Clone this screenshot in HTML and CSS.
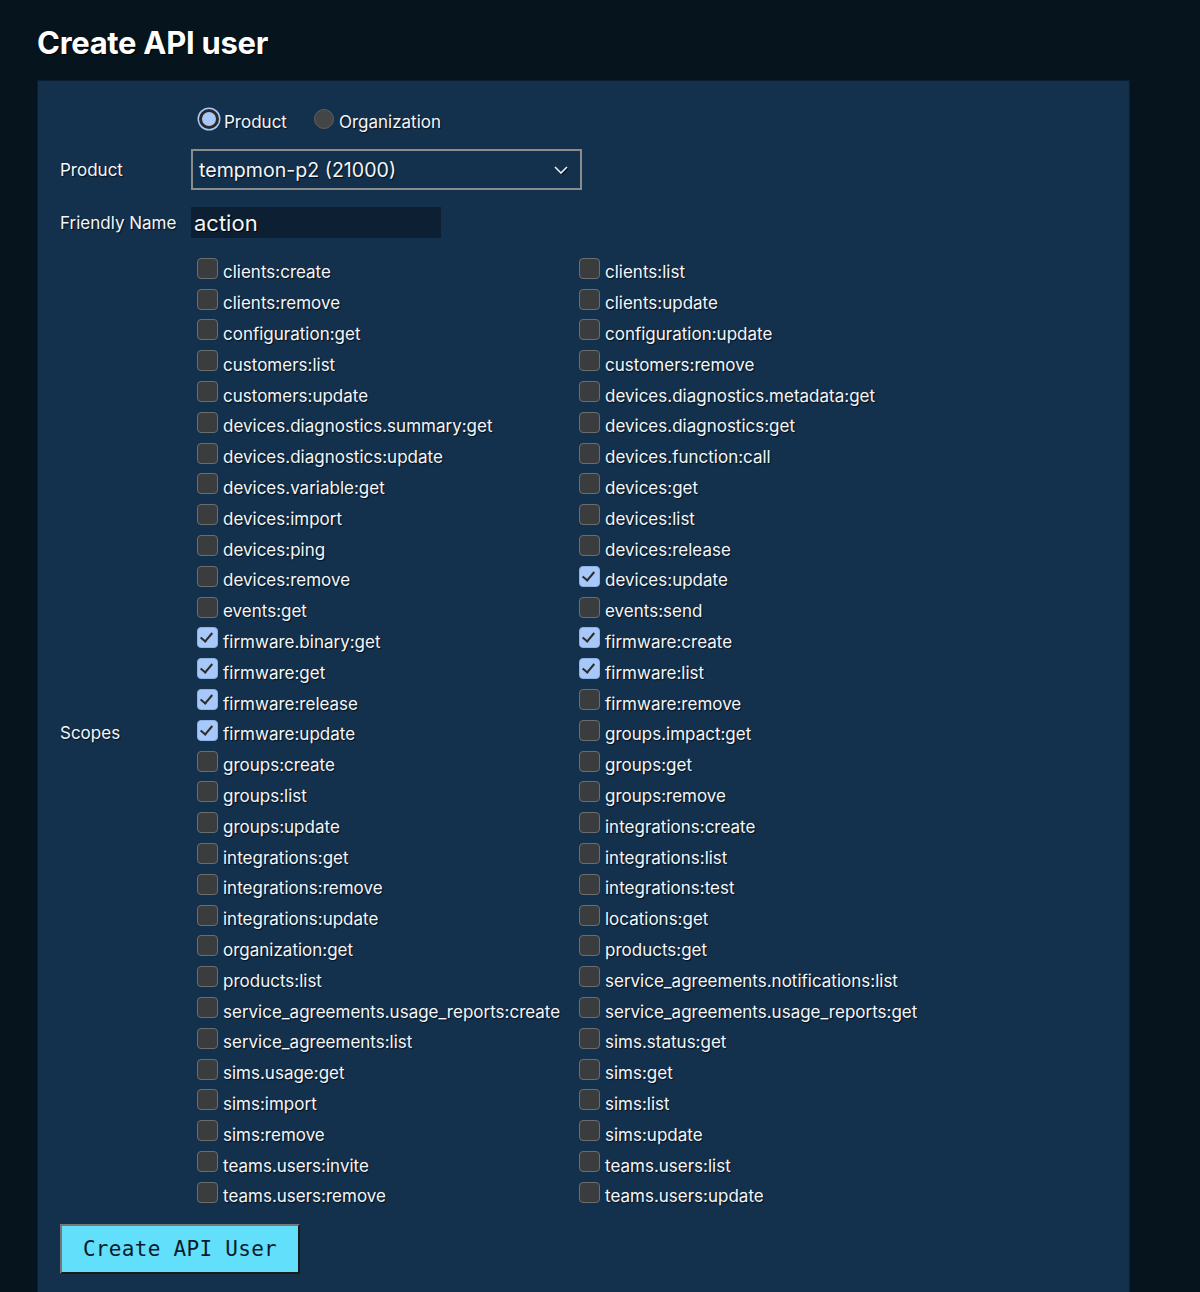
FILE: index.html
```html
<!DOCTYPE html>
<html>
<head>
<meta charset="utf-8">
<link rel="stylesheet" href="styles.css">
</head>
<body>
<h1 class="title">Create API user</h1>
<div class="panel">
  <form class="form">
    <div class="label"></div>
    <div class="radios">
      <label class="radio-item"><input type="radio" name="kind" checked><span>Product</span></label>
      <label class="radio-item"><input type="radio" name="kind"><span>Organization</span></label>
    </div>

    <div class="label label-product">Product</div>
    <div class="select">
      <span>tempmon-p2 (21000)</span>
      <svg class="chev" width="14" height="8" viewBox="0 0 14 8"><path d="M1 1 L7 7 L13 1" fill="none" stroke="#f2f2f2" stroke-width="1.6"/></svg>
    </div>

    <div class="label label-name">Friendly Name</div>
    <div class="name-row"><input class="name" type="text" value="action"></div>

    <div class="label label-scopes">Scopes</div>
    <div class="scopes">
      <label class="scope"><input type="checkbox"><span>clients:create</span></label>
      <label class="scope"><input type="checkbox"><span>clients:list</span></label>
      <label class="scope"><input type="checkbox"><span>clients:remove</span></label>
      <label class="scope"><input type="checkbox"><span>clients:update</span></label>
      <label class="scope"><input type="checkbox"><span>configuration:get</span></label>
      <label class="scope"><input type="checkbox"><span>configuration:update</span></label>
      <label class="scope"><input type="checkbox"><span>customers:list</span></label>
      <label class="scope"><input type="checkbox"><span>customers:remove</span></label>
      <label class="scope"><input type="checkbox"><span>customers:update</span></label>
      <label class="scope"><input type="checkbox"><span>devices.diagnostics.metadata:get</span></label>
      <label class="scope"><input type="checkbox"><span>devices.diagnostics.summary:get</span></label>
      <label class="scope"><input type="checkbox"><span>devices.diagnostics:get</span></label>
      <label class="scope"><input type="checkbox"><span>devices.diagnostics:update</span></label>
      <label class="scope"><input type="checkbox"><span>devices.function:call</span></label>
      <label class="scope"><input type="checkbox"><span>devices.variable:get</span></label>
      <label class="scope"><input type="checkbox"><span>devices:get</span></label>
      <label class="scope"><input type="checkbox"><span>devices:import</span></label>
      <label class="scope"><input type="checkbox"><span>devices:list</span></label>
      <label class="scope"><input type="checkbox"><span>devices:ping</span></label>
      <label class="scope"><input type="checkbox"><span>devices:release</span></label>
      <label class="scope"><input type="checkbox"><span>devices:remove</span></label>
      <label class="scope"><input type="checkbox" checked><span>devices:update</span></label>
      <label class="scope"><input type="checkbox"><span>events:get</span></label>
      <label class="scope"><input type="checkbox"><span>events:send</span></label>
      <label class="scope"><input type="checkbox" checked><span>firmware.binary:get</span></label>
      <label class="scope"><input type="checkbox" checked><span>firmware:create</span></label>
      <label class="scope"><input type="checkbox" checked><span>firmware:get</span></label>
      <label class="scope"><input type="checkbox" checked><span>firmware:list</span></label>
      <label class="scope"><input type="checkbox" checked><span>firmware:release</span></label>
      <label class="scope"><input type="checkbox"><span>firmware:remove</span></label>
      <label class="scope"><input type="checkbox" checked><span>firmware:update</span></label>
      <label class="scope"><input type="checkbox"><span>groups.impact:get</span></label>
      <label class="scope"><input type="checkbox"><span>groups:create</span></label>
      <label class="scope"><input type="checkbox"><span>groups:get</span></label>
      <label class="scope"><input type="checkbox"><span>groups:list</span></label>
      <label class="scope"><input type="checkbox"><span>groups:remove</span></label>
      <label class="scope"><input type="checkbox"><span>groups:update</span></label>
      <label class="scope"><input type="checkbox"><span>integrations:create</span></label>
      <label class="scope"><input type="checkbox"><span>integrations:get</span></label>
      <label class="scope"><input type="checkbox"><span>integrations:list</span></label>
      <label class="scope"><input type="checkbox"><span>integrations:remove</span></label>
      <label class="scope"><input type="checkbox"><span>integrations:test</span></label>
      <label class="scope"><input type="checkbox"><span>integrations:update</span></label>
      <label class="scope"><input type="checkbox"><span>locations:get</span></label>
      <label class="scope"><input type="checkbox"><span>organization:get</span></label>
      <label class="scope"><input type="checkbox"><span>products:get</span></label>
      <label class="scope"><input type="checkbox"><span>products:list</span></label>
      <label class="scope"><input type="checkbox"><span>service_agreements.notifications:list</span></label>
      <label class="scope"><input type="checkbox"><span>service_agreements.usage_reports:create</span></label>
      <label class="scope"><input type="checkbox"><span>service_agreements.usage_reports:get</span></label>
      <label class="scope"><input type="checkbox"><span>service_agreements:list</span></label>
      <label class="scope"><input type="checkbox"><span>sims.status:get</span></label>
      <label class="scope"><input type="checkbox"><span>sims.usage:get</span></label>
      <label class="scope"><input type="checkbox"><span>sims:get</span></label>
      <label class="scope"><input type="checkbox"><span>sims:import</span></label>
      <label class="scope"><input type="checkbox"><span>sims:list</span></label>
      <label class="scope"><input type="checkbox"><span>sims:remove</span></label>
      <label class="scope"><input type="checkbox"><span>sims:update</span></label>
      <label class="scope"><input type="checkbox"><span>teams.users:invite</span></label>
      <label class="scope"><input type="checkbox"><span>teams.users:list</span></label>
      <label class="scope"><input type="checkbox"><span>teams.users:remove</span></label>
      <label class="scope"><input type="checkbox"><span>teams.users:update</span></label>
    </div>
  </form>
  <div class="actions">
    <button class="submit" type="button">Create API User</button>
  </div>
</div>
</body>
</html>
```

FILE: styles.css
```css
html, body {
  margin: 0;
  padding: 0;
  background: #06141e;
  height: 1292px;
  overflow: hidden;
}
body {
  font-family: Inter, "Noto Sans", sans-serif;
  color: #f4f6f8;
  padding: 0 70px 0 37px;
}
.title {
  margin: 0;
  padding-top: 24px;
  height: 80px;
  box-sizing: border-box;
  font-size: 31px;
  font-weight: 700;
  letter-spacing: -0.3px;
  line-height: 38px;
  color: #ffffff;
  text-shadow: 1px 1px 1px #000;
}
.panel {
  width: 1093px;
  height: 1212px;
  box-sizing: border-box;
  background: #13304d;
  border: 1px solid #0b1f34;
  border-bottom: none;
  padding: 25px 0 0 22px;
  text-shadow: 1px 1px 1px #04101c;
}
.form {
  display: grid;
  grid-template-columns: 131px 1fr;
  align-items: center;
  row-gap: 17px;
}
.label {
  font-size: 17px;
}
.radios {
  display: flex;
  gap: 27px;
  height: 26px;
  align-items: center;
  padding-left: 8px;
}
.radio-item {
  display: flex;
  align-items: center;
  font-size: 17px;
}
.radio-item span { margin-left: 5px; position: relative; top: 3px; }
.radio-item input {
  appearance: none;
  -webkit-appearance: none;
  margin: 0;
  width: 20px;
  height: 20px;
  border-radius: 50%;
  background: #444546;
  border: 1px solid #5e5f61;
  box-sizing: border-box;
}
.radio-item input:checked {
  background: #a7c8f8;
  border: 3px solid #2a2a2a;
  box-shadow: 0 0 0 1.5px #a7c8f8;
}
.select {
  height: 41px;
  width: 391px;
  box-sizing: border-box;
  border: 2px solid #8c8c8c;
  display: flex;
  align-items: center;
  justify-content: space-between;
  padding: 0 12px 0 6px;
  font-size: 19.6px;
}
.chev { filter: drop-shadow(1px 1px 0 #04101c); }
.name {
  display: block;
  width: 250px;
  height: 31px;
  box-sizing: border-box;
  background: #0c1f33;
  border: none;
  outline: none;
  color: #f4f6f8;
  font-family: Inter, "Noto Sans", sans-serif;
  font-size: 22px;
  padding: 0 3px;
  margin: 0;
  text-shadow: 1px 1px 1px #000;
}
.scopes {
  display: grid;
  grid-template-columns: 382px 1fr;
  grid-auto-rows: 30.8px;
  padding-left: 6px;
  padding-top: 1px;
}
.scope {
  display: flex;
  align-items: center;
  font-size: 17px;
  white-space: nowrap;
}
.scope span { margin-left: 5px; position: relative; top: 1px; }
.scope input {
  appearance: none;
  -webkit-appearance: none;
  margin: -6px 0 0 0;
  width: 21px;
  height: 21px;
  box-sizing: border-box;
  border-radius: 4px;
  background: #3b3c3d;
  border: 1.5px solid #6c6d6f;
  position: relative;
  flex: none;
}
.scope input:checked {
  background: #a7c8f8;
  border-color: #8fb2e6;
}
.scope input:checked::after {
  content: "";
  position: absolute;
  left: 5px;
  top: 2px;
  width: 5px;
  height: 10px;
  border-right: 2.5px solid #2c2c2c;
  border-bottom: 2.5px solid #2c2c2c;
  transform: rotate(40deg);
}
.actions {
  padding-top: 13px;
}
.submit {
  width: 240px;
  height: 50px;
  box-sizing: border-box;
  background: #62dffb;
  border: 2px solid;
  border-color: #777 #1a1a1a #1a1a1a #777;
  font-family: "DejaVu Sans Mono", "Liberation Mono", monospace;
  font-size: 21px;
  color: #0b1b2a;
  letter-spacing: 0.3px;
  padding: 0;
}
```
